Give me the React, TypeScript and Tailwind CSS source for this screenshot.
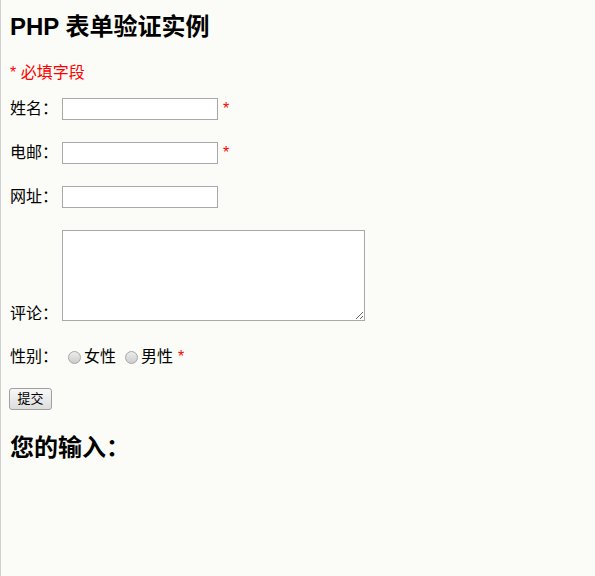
const FONT = "font-['Liberation_Sans','Noto_Sans_CJK_SC',sans-serif]";

function Star() {
  return <span className="ml-[5px] text-[16px] text-[#ff0000]">*</span>;
}

function Radio({ label, first }: { label: string; first?: boolean }) {
  return (
    <span className="flex items-center">
      <span
        className={`${first ? "ml-[6px]" : "ml-[9px]"} mr-[3px] h-[13px] w-[13px] rounded-full border border-[#a6a6a6] bg-gradient-to-b from-[#ececec] to-[#cdcdcd]`}
      />
      <span>{label}</span>
    </span>
  );
}

function Field({ label, required }: { label: string; required?: boolean }) {
  return (
    <div className="mt-[22px] flex h-[22px] items-center first:mt-[14px]">
      <span className="w-[53px] shrink-0 pl-[1px]">{label}</span>
      <input type="text" className="h-[22px] w-[156px] border border-[#a9a9a9] bg-white outline-none" />
      {required && <Star />}
    </div>
  );
}

export default function App() {
  return (
    <div className={`min-h-screen border-l border-[#cfcfcf] bg-[#fbfcf7] pl-[8px] pt-[12px] text-[16px] text-black ${FONT}`}>
      <h2 className="h-[30px] pl-[1px] text-[24px] font-bold leading-[30px]">PHP 表单验证实例</h2>
      <p className="mt-[20px] h-[22px] pl-[1px] leading-[22px] text-[#ff0000]">* 必填字段</p>

      <form onSubmit={(e) => e.preventDefault()}>
        <div>
          <Field label="姓名：" required />
          <Field label="电邮：" required />
          <Field label="网址：" />
        </div>

        <div className="mt-[22px] flex items-end">
          <span className="w-[53px] shrink-0 pl-[1px] leading-[22px]">评论：</span>
          <textarea className="mb-[4px] h-[91px] w-[303px] border border-[#a9a9a9] bg-white outline-none" />
        </div>

        <div className="mt-[21px] flex h-[22px] items-center">
          <span className="w-[53px] shrink-0 pl-[1px]">性别：</span>
          <Radio label="女性" first />
          <Radio label="男性" />
          <Star />
        </div>

        <button
          type="submit"
          className="mt-[20px] block h-[22px] w-[43px] rounded-[3px] border border-[#a0a0a0] bg-gradient-to-b from-[#f8f8f8] to-[#dddddd] text-[13px] leading-[20px]"
        >
          提交
        </button>
      </form>

      <h2 className="mt-[23px] h-[30px] pl-[1px] text-[24px] font-bold leading-[30px]">您的输入：</h2>
    </div>
  );
}
